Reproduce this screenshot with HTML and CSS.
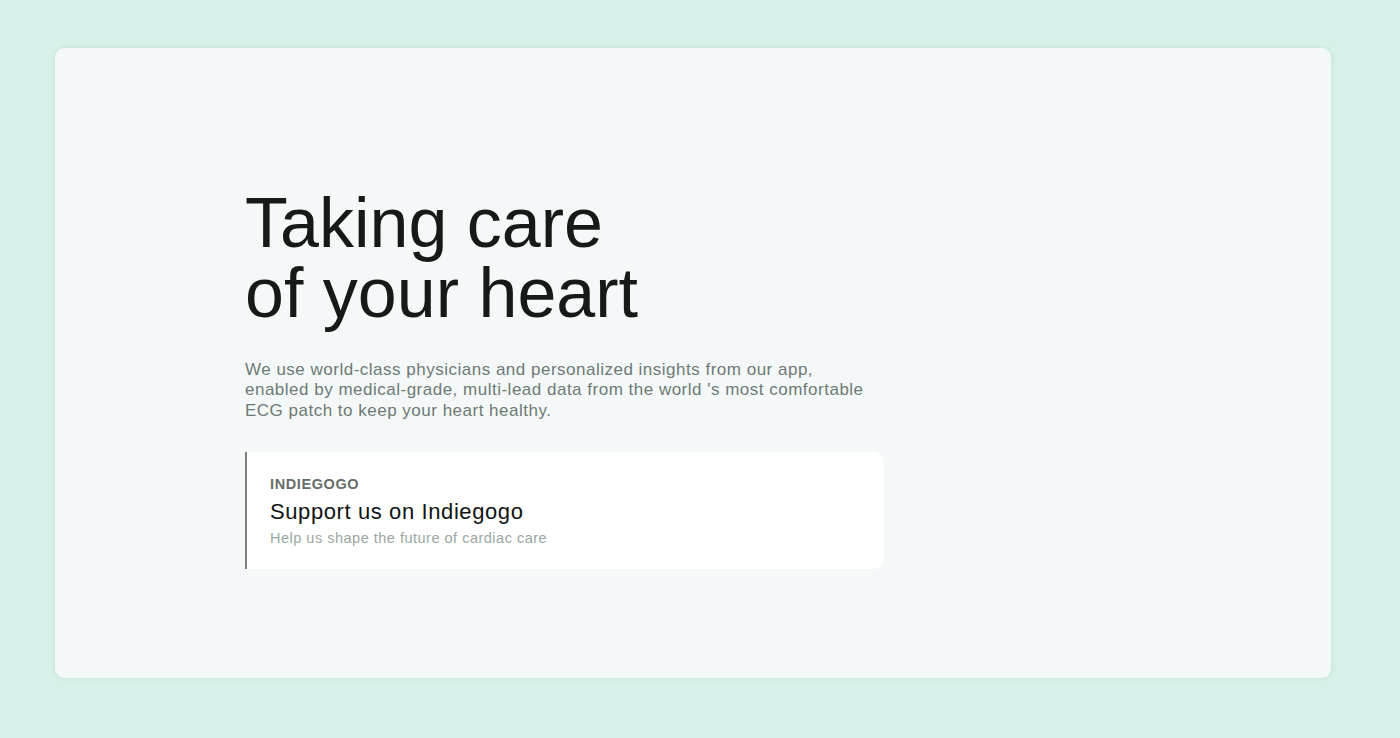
FILE: index.html
```html
<!DOCTYPE html>
<html lang="en">
<head>
<meta charset="utf-8">
<title>Taking care of your heart</title>
<link rel="stylesheet" href="styles.css">
</head>
<body>
<main class="page">
  <section class="panel">
    <div class="hero">
      <h1 class="hero-title"><span class="hero-line">Taking care</span><span class="hero-line">of your heart</span></h1>
      <p class="hero-text">We use world-class physicians and personalized insights from our app,<br>enabled by medical-grade, multi-lead data from the world 's most comfortable<br>ECG patch to keep your heart healthy.</p>
      <a class="cta" href="#">
        <span class="cta-label">INDIEGOGO</span>
        <span class="cta-title">Support us on Indiegogo</span>
        <span class="cta-sub">Help us shape the future of cardiac care</span>
      </a>
    </div>
  </section>
</main>
</body>
</html>
```

FILE: styles.css
```css
* { box-sizing: border-box; }
html, body { margin: 0; padding: 0; }
body {
  background: #d6f1e9;
  font-family: "Liberation Sans", Arial, sans-serif;
  width: 1400px;
  height: 738px;
  overflow: hidden;
}
.page {
  padding: 48px 69px 60px 55px;
}
.panel {
  background: #f4f8f8;
  border-radius: 9px;
  height: 630px;
  box-shadow: 0 0 4px rgba(150, 190, 180, 0.35);
  padding: 139.5px 0 0 190px;
}
.hero { width: 639px; }
.hero-title {
  margin: 0;
  font-weight: 400;
  font-size: 70px;
  line-height: 70px;
  color: #151917;
  display: flex;
  flex-direction: column;
}
.hero-line { display: block; height: 70px; }
.hero-text {
  margin: 32px 0 0;
  font-size: 17px;
  line-height: 20.5px;
  letter-spacing: 0.5px;
  color: #6e7a76;
  white-space: nowrap;
}
.cta {
  display: flex;
  flex-direction: column;
  margin-top: 31px;
  background: #ffffff;
  border-left: 2px solid #7b807e;
  border-radius: 0 10px 10px 0;
  padding: 24px 20px 21.5px 23px;
  text-decoration: none;
}
.cta-label {
  font-size: 14.5px;
  line-height: 17px;
  font-weight: 700;
  letter-spacing: 0.6px;
  color: #676d6b;
}
.cta-title {
  margin-top: 6px;
  font-size: 22px;
  line-height: 26px;
  letter-spacing: 0.6px;
  color: #111413;
}
.cta-sub {
  margin-top: 5px;
  font-size: 14.5px;
  line-height: 17px;
  letter-spacing: 0.5px;
  color: #9ba7a2;
}
```
